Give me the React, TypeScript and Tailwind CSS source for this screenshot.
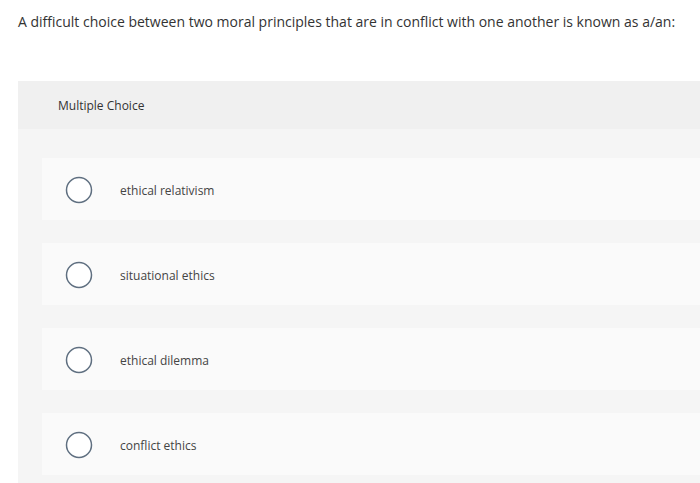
import React from "react";

const options = ["ethical relativism", "situational ethics", "ethical dilemma", "conflict ethics"];

function Radio() {
  return (
    <svg width="28" height="28" viewBox="0 0 28 28" className="shrink-0">
      <circle cx="14" cy="14" r="12.5" fill="#ffffff" stroke="#5f6f80" strokeWidth="1.5" />
    </svg>
  );
}

export default function App() {
  return (
    <div className="w-[700px] h-[483px] bg-white overflow-hidden" style={{ fontFamily: '"Open Sans", sans-serif' }}>
      <div className="pl-[18px] pt-[12px] h-[81px]">
        <p className="text-[14px] leading-[20px] text-[#333333]">
          A difficult choice between two moral principles that are in conflict with one another is known as a/an:
        </p>
      </div>
      <div className="ml-[18px]">
        <div className="h-[48px] bg-[#f0f0f0] flex items-center pl-[40px] pt-[2px]">
          <span className="text-[12px] text-[#333333]">Multiple Choice</span>
        </div>
        <div className="bg-[#f5f5f5] pl-[24px] pt-[29px] pb-[8px] flex flex-col gap-[23px]">
          {options.map((o) => (
            <div key={o} className="h-[62px] bg-[#fafafa] flex items-center pl-[23px] pt-[1px]">
              <Radio />
              <span className="ml-[27px] pt-[2px] text-[12px] text-[#444444]">{o}</span>
            </div>
          ))}
        </div>
      </div>
    </div>
  );
}
